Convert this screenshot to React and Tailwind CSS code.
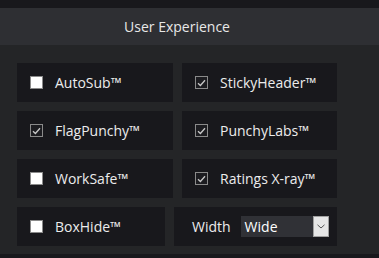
import React from "react";

function Box({ checked }) {
  if (checked) {
    return (
      <span className="w-[13px] h-[13px] border border-[#8a8a8a] bg-[#1c1c20] flex items-center justify-center shrink-0">
        <svg width="9" height="8" viewBox="0 0 9 8">
          <path d="M1 4.2 L3.4 6.5 L8 1.2" fill="none" stroke="#c8c8c8" strokeWidth="1.3" />
        </svg>
      </span>
    );
  }
  return <span className="w-[13px] h-[13px] border border-[#8a8a8a] bg-white shrink-0" />;
}

function Cell({ label, checked, w }) {
  return (
    <div className={`h-[39px] bg-[#18181c] flex items-center pl-[13px] ${w}`}>
      <div className="flex items-center gap-[12px]">
        <Box checked={checked} />
        <span className="text-[14px] text-[#ececec]">{label}</span>
      </div>
    </div>
  );
}

export default function App() {
  return (
    <div className="w-[379px] h-[258px] bg-[#242527] flex flex-col" style={{ fontFamily: '"Open Sans", "Noto Sans", sans-serif' }}>
      <div className="h-[8px] bg-[#18181c]" />
      <div className="h-[37px] bg-[#2e2f33] flex items-center justify-center pr-[25px] text-[14px] text-[#e8e8e8]">
        User Experience
      </div>
      <div className="flex flex-col gap-[9px] pl-[17px] pt-[18px]">
        <div className="flex gap-[9px]">
          <Cell label="AutoSub™" w="w-[156px]" />
          <Cell label="StickyHeader™" checked w="w-[155px]" />
        </div>
        <div className="flex gap-[9px]">
          <Cell label="FlagPunchy™" checked w="w-[156px]" />
          <Cell label="PunchyLabs™" checked w="w-[155px]" />
        </div>
        <div className="flex gap-[9px]">
          <Cell label="WorkSafe™" w="w-[156px]" />
          <Cell label="Ratings X-ray™" checked w="w-[155px]" />
        </div>
        <div className="flex gap-[9px]">
          <Cell label="BoxHide™" w="w-[148px]" />
          <div className="h-[39px] w-[163px] bg-[#18181c] flex items-center pl-[18px]">
            <span className="text-[14px] text-[#ececec] mr-[10px]">Width</span>
            <div className="w-[88px] h-[21px] bg-[#303136] flex items-center">
              <span className="flex-1 pl-[4px] text-[14px] text-white">Wide</span>
              <span className="w-[16px] h-[21px] bg-[#e6e6e6] border border-[#a0a0a0] flex items-center justify-center">
                <svg width="8" height="5" viewBox="0 0 8 5">
                  <path d="M0.5 0.8 L4 4 L7.5 0.8" fill="none" stroke="#555" strokeWidth="1" />
                </svg>
              </span>
            </div>
          </div>
        </div>
      </div>
      <div className="flex-1" />
      <div className="h-[4px] bg-[#18181c]" />
    </div>
  );
}
